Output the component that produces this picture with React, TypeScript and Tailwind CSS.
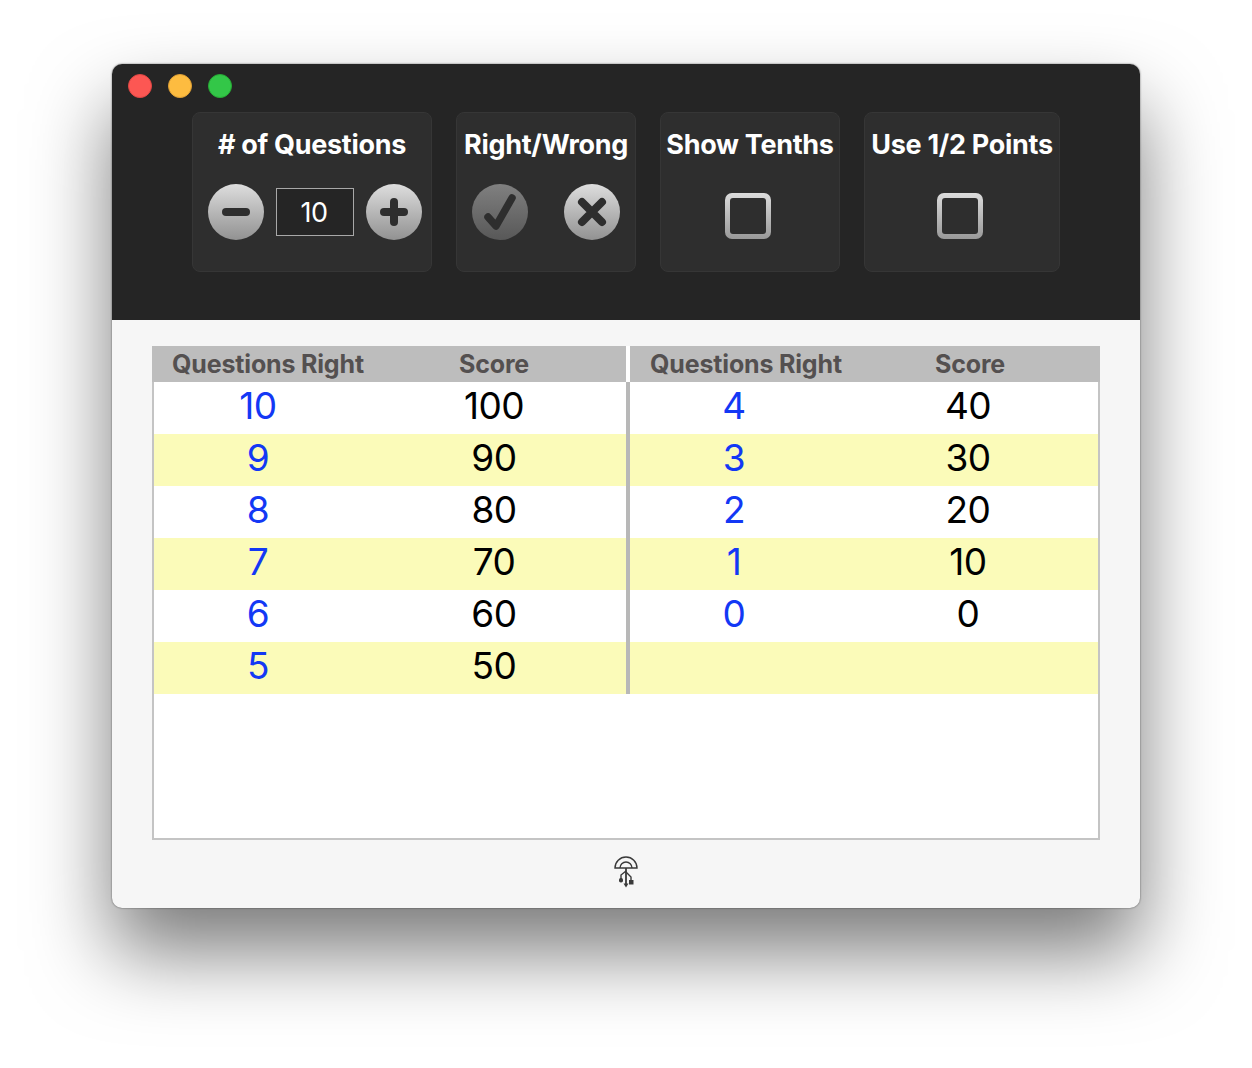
import React from 'react';

const LEFT_ROWS = [[10, 100], [9, 90], [8, 80], [7, 70], [6, 60], [5, 50]];
const RIGHT_ROWS = [[4, 40], [3, 30], [2, 20], [1, 10], [0, 0], ['', '']];

function RoundButton({ dim, children }: { dim?: boolean; children: React.ReactNode }) {
  return (
    <div
      className={
        dim
          ? 'w-14 h-14 rounded-full flex items-center justify-center bg-gradient-to-b from-[#808080] to-[#585858]'
          : 'w-14 h-14 rounded-full flex items-center justify-center bg-gradient-to-b from-[#dedede] to-[#929292]'
      }
    >
      {children}
    </div>
  );
}

function Panel({ title, width, children }: { title: string; width: string; children: React.ReactNode }) {
  return (
    <div className={`${width} h-40 shrink-0 rounded-lg bg-[#2e2e2e] border border-[#363636] flex flex-col items-center`}>
      <div className="mt-[14px] h-9 text-[27px] leading-9 font-bold text-white whitespace-nowrap tracking-[-0.3px]">{title}</div>
      {children}
    </div>
  );
}

function CheckBox() {
  return (
    <div className="mt-[30px] -ml-1 w-[46px] h-[46px] rounded-[7px] bg-gradient-to-b from-[#dcdcdc] to-[#999999] p-[5px]">
      <div className="w-full h-full rounded-[3px] bg-[#2e2e2e]" />
    </div>
  );
}

function ScoreColumn({ rows, width }: { rows: (number | string)[][]; width: string }) {
  return (
    <div className={`${width} shrink-0`}>
      {rows.map((row, i) => (
        <div key={i} className={i % 2 === 1 ? 'h-[52px] flex bg-[#fbfbb9]' : 'h-[52px] flex bg-white'}>
          <div className="w-[208px] text-center text-[37px] leading-[47px] text-[#1338f5] tracking-[-0.5px]">{row[0]}</div>
          <div className="flex-1 text-center text-[37px] leading-[47px] text-black tracking-[-0.5px]">{row[1]}</div>
        </div>
      ))}
    </div>
  );
}

export default function App() {
  return (
    <div className="min-h-[1068px] bg-white pl-[112px] pt-[64px] font-['Inter',sans-serif]">
      <div className="w-[1028px] h-[844px] rounded-[10px] overflow-hidden bg-[#f6f6f6] shadow-[0_44px_80px_rgba(0,0,0,0.52),0_0_2px_rgba(0,0,0,0.6)]">
        <div className="h-[256px] bg-[#252525] pt-[10px]">
          <div className="flex gap-4 pl-4">
            <div className="w-6 h-6 rounded-full bg-[#fc5753] border border-[#df4744]" />
            <div className="w-6 h-6 rounded-full bg-[#fdbc40] border border-[#de9f34]" />
            <div className="w-6 h-6 rounded-full bg-[#33c748] border border-[#27aa35]" />
          </div>
          <div className="flex gap-6 pl-20 mt-[14px]">
            <Panel title="# of Questions" width="w-60">
              <div className="mt-[21px] ml-[6px] flex items-center gap-3">
                <RoundButton>
                  <svg width="28" height="8" viewBox="0 0 28 8"><rect width="28" height="8" rx="4" fill="#2e2e2e" /></svg>
                </RoundButton>
                <div className="w-[78px] h-12 pr-[2px] border border-[#a8a8a8] bg-[#252525] text-white text-[27px] leading-[47px] text-center tracking-[-0.5px]">10</div>
                <RoundButton>
                  <svg width="28" height="28" viewBox="0 0 28 28" fill="#2e2e2e">
                    <rect y="10" width="28" height="8" rx="4" />
                    <rect x="10" width="8" height="28" rx="4" />
                  </svg>
                </RoundButton>
              </div>
            </Panel>
            <Panel title="Right/Wrong" width="w-[180px]">
              <div className="mt-[21px] flex items-center gap-9">
                <RoundButton dim>
                  <svg width="34" height="38" viewBox="0 0 34 38" fill="none" stroke="#2e2e2e" strokeWidth="7.5" strokeLinecap="round" strokeLinejoin="round">
                    <path d="M5 24 L13 33 L29 5" />
                  </svg>
                </RoundButton>
                <RoundButton>
                  <svg width="30" height="30" viewBox="0 0 30 30" fill="none" stroke="#2e2e2e" strokeWidth="8" strokeLinecap="round">
                    <path d="M5 5 L25 25 M25 5 L5 25" />
                  </svg>
                </RoundButton>
              </div>
            </Panel>
            <Panel title="Show Tenths" width="w-[180px]">
              <CheckBox />
            </Panel>
            <Panel title="Use 1/2 Points" width="w-[196px]">
              <CheckBox />
            </Panel>
          </div>
        </div>

        <div className="pt-[26px] px-10">
          <div className="h-[494px] bg-white border-2 border-t-0 border-[#c4c4c4]">
            <div className="flex h-9 -mx-[2px] bg-white">
              <div className="w-[474px] bg-[#bdbdbd] flex text-[25px] leading-9 font-bold text-[#545050] tracking-[-0.17px]">
                <div className="w-[232px] text-center whitespace-nowrap">Questions Right</div>
                <div className="flex-1 pr-[22px] text-center whitespace-nowrap">Score</div>
              </div>
              <div className="w-1" />
              <div className="flex-1 bg-[#bdbdbd] flex text-[25px] leading-9 font-bold text-[#545050] tracking-[-0.17px]">
                <div className="w-[232px] text-center whitespace-nowrap">Questions Right</div>
                <div className="flex-1 pr-[22px] text-center whitespace-nowrap">Score</div>
              </div>
            </div>
            <div className="flex">
              <ScoreColumn rows={LEFT_ROWS} width="w-[472px]" />
              <div className="w-1 h-[312px] bg-[#b8b8b8]" />
              <ScoreColumn rows={RIGHT_ROWS} width="w-[468px]" />
            </div>
          </div>
          <div className="flex justify-center mt-[15px]">
            <svg width="26" height="34" viewBox="0 0 26 34" fill="none" stroke="#3a3a3a" strokeWidth="1.4">
              <path d="M2 13 A11 11 0 0 1 24 13 Z" />
              <path d="M7 13 A6 6 0 0 1 19 13" />
              <path d="M13 13 V31" strokeWidth="1.8" />
              <path d="M13 16 L8 20 V24 M13 17 L18 22 V26" />
              <rect x="6" y="23" width="4" height="4.5" fill="#3a3a3a" stroke="none" rx="1.8" />
              <rect x="16" y="25" width="4.5" height="4.5" fill="#3a3a3a" stroke="none" />
              <path d="M10.5 28.5 H15.5 L13 32.5 Z" fill="#3a3a3a" stroke="none" />
            </svg>
          </div>
        </div>
      </div>
    </div>
  );
}
